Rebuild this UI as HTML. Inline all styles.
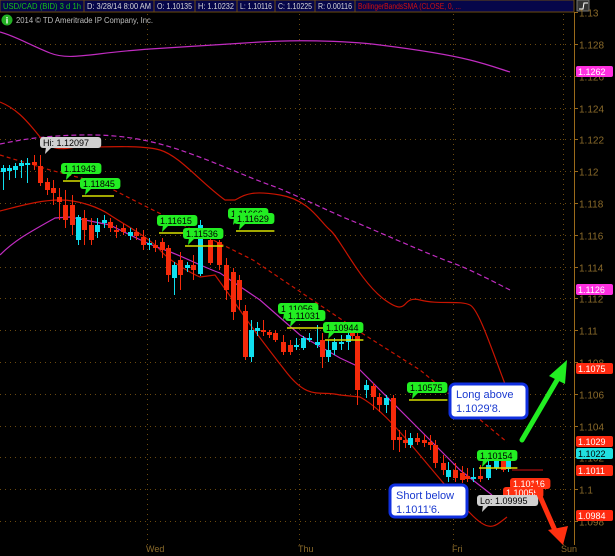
<!DOCTYPE html>
<html><head><meta charset="utf-8"><style>
body{margin:0;background:#000;width:615px;height:556px;overflow:hidden;font-family:"Liberation Sans",sans-serif}
svg{display:block}
</style></head><body>
<svg id="s" width="615" height="556" xmlns="http://www.w3.org/2000/svg" font-family="Liberation Sans, sans-serif">
<rect width="615" height="556" fill="#000"/>
<g id="grid" stroke="#6b4a10" stroke-width="1" stroke-dasharray="1,4"></g>
<!-- top bar -->
<rect x="0" y="0" width="574" height="12" fill="#06064a" stroke="#6b4a10"/>
<g font-size="8.5" fill="#d8d8d8" lengthAdjust="spacingAndGlyphs">
<text x="3" y="9" fill="#18c018" textLength="78" lengthAdjust="spacingAndGlyphs">USD/CAD (BID) 3 d 1h</text>
<line x1="84" y1="0" x2="84" y2="12" stroke="#6b4a10"/>
<text x="87" y="9" textLength="64" lengthAdjust="spacingAndGlyphs">D: 3/28/14 8:00 AM</text>
<line x1="154" y1="0" x2="154" y2="12" stroke="#6b4a10"/>
<text x="157" y="9" textLength="35" lengthAdjust="spacingAndGlyphs">O: 1.10135</text>
<line x1="195" y1="0" x2="195" y2="12" stroke="#6b4a10"/>
<text x="198" y="9" textLength="36" lengthAdjust="spacingAndGlyphs">H: 1.10232</text>
<line x1="237" y1="0" x2="237" y2="12" stroke="#6b4a10"/>
<text x="240" y="9" textLength="32" lengthAdjust="spacingAndGlyphs">L: 1.10116</text>
<line x1="275" y1="0" x2="275" y2="12" stroke="#6b4a10"/>
<text x="278" y="9" textLength="34" lengthAdjust="spacingAndGlyphs">C: 1.10225</text>
<line x1="315" y1="0" x2="315" y2="12" stroke="#6b4a10"/>
<text x="318" y="9" textLength="34" lengthAdjust="spacingAndGlyphs">R: 0.00116</text>
<line x1="355" y1="0" x2="355" y2="12" stroke="#6b4a10"/>
<text x="358" y="9" fill="#d01010" textLength="103" lengthAdjust="spacingAndGlyphs">BollingerBandsSMA (CLOSE, 0, ...</text>
</g>
<rect x="577" y="0" width="12" height="11" fill="#333" stroke="#777"/>
<path d="M579 9 L583 9 L584 3 L588 3" stroke="#fff" fill="none"/>
<circle cx="7" cy="20" r="5.5" fill="#22b022"/>
<text x="7" y="23.5" font-size="9" fill="#fff" text-anchor="middle" font-weight="bold">i</text>
<text x="16" y="23" font-size="8.5" fill="#bdbdbd" textLength="137" lengthAdjust="spacingAndGlyphs">2014 © TD Ameritrade IP Company, Inc.</text>
<!-- axis -->
<line x1="574.5" y1="12" x2="574.5" y2="545" stroke="#9a6a1a"/>
<g id="ax" font-size="10" fill="#8a6a2a"></g>
<g font-size="9" fill="#8a6a2a">
<text x="146" y="552">Wed</text><text x="298" y="552">Thu</text><text x="452" y="552">Fri</text><text x="561" y="552">Sun</text>
</g>
<!-- indicator lines -->
<g fill="none" stroke-width="1.2">
<path stroke="#c02cc0" d="M0,32 C15,36 30,45 50,53 S90,53 150,49 S230,44 260,42 S340,40 380,45 S450,55 470,60 S500,69 510,72"/>
<path stroke="#c02cc0" stroke-dasharray="5,3" d="M0,144 C20,140 40,136 80,135 S150,140 180,150 S250,178 270,185 S330,212 350,220 S430,255 450,262 S500,285 510,290"/>
<path stroke="#c81400" d="M0,102 C15,108 25,118 40,137 S70,146 80,147 S140,144 160,150 S200,182 225,200 L235,200 C245,195 250,190 280,195 S320,222 330,230 S360,282 385,300 S400,295 420,300 S460,300 470,305 S495,360 515,410"/>
<path stroke="#c81400" stroke-dasharray="4,3" d="M0,155 L50,170 L100,183 L147,207 L253,260 L360,332 L420,370 L507,442"/>
<path stroke="#c81400" d="M0,211 C20,206 40,200 60,200 S100,208 110,215 S150,238 160,250 S195,275 200,277 L215,275 L233,300 C245,318 265,345 287,373 S320,390 340,395 L360,397 C375,405 390,420 413,447 S450,492 470,513 S495,526 507,517"/>
<path stroke="#c02cc0" d="M0,255 C15,240 30,232 55,218 L70,217 L110,225 C130,235 150,245 165,250 S205,268 220,273 L260,300 L300,335 L340,358 L355,365 L380,390 L430,440 L460,470 L492,495"/>
</g>
<g id="c"></g>
<line x1="512" y1="470" x2="543" y2="470" stroke="#d01010"/>
<g id="lab" font-size="9"></g>
<!-- boxes -->
<rect x="450" y="384" width="77" height="34" rx="5" fill="#fff" stroke="#1030e0" stroke-width="3"/>
<text x="456" y="398" font-size="11" fill="#1a3ad0">Long above</text>
<text x="456" y="412" font-size="11" fill="#1a3ad0">1.1029'8.</text>
<rect x="390" y="485" width="77" height="32" rx="5" fill="#fff" stroke="#1030e0" stroke-width="3"/>
<text x="396" y="499" font-size="11" fill="#1a3ad0">Short below</text>
<text x="396" y="513" font-size="11" fill="#1a3ad0">1.1011'6.</text>
<!-- arrows -->
<line x1="522" y1="440" x2="560" y2="375" stroke="#22ee22" stroke-width="5" stroke-linecap="round"/>
<polygon points="567,360 549,376 565,384" fill="#22ee22"/>
<line x1="535" y1="485" x2="557" y2="535" stroke="#ff3010" stroke-width="5" stroke-linecap="round"/>
<polygon points="563,545 548,530 568,526" fill="#ff3010"/>
<!-- right labels -->
<g font-size="9" fill="#fff">
<rect x="576" y="66" width="37" height="11" rx="2" fill="#ff30e0"/><text x="578" y="75">1.1262</text>
<rect x="576" y="284" width="37" height="11" rx="2" fill="#ff30e0"/><text x="578" y="293">1.1126</text>
<rect x="576" y="363" width="37" height="11" rx="2" fill="#ff2a10"/><text x="578" y="372">1.1075</text>
<rect x="576" y="436" width="37" height="11" rx="2" fill="#ff2a10"/><text x="578" y="445">1.1029</text>
<rect x="576" y="448" width="37" height="11" rx="2" fill="#20e0e0"/><text x="578" y="457" fill="#000">1.1022</text>
<rect x="576" y="465" width="37" height="11" rx="2" fill="#ff2a10"/><text x="578" y="474">1.1011</text>
<rect x="576" y="510" width="37" height="11" rx="2" fill="#ff2a10"/><text x="578" y="519">1.0984</text>
</g>
</svg>
<script>
var NS="http://www.w3.org/2000/svg";
function el(p,t,a,txt){var e=document.createElementNS(NS,t);for(var k in a)e.setAttribute(k,a[k]);if(txt)e.textContent=txt;p.appendChild(e);return e;}
var Y=function(p){return 44+(1.128-p)*15900;};
var g=document.getElementById('grid'),ax=document.getElementById('ax');
for(var i=0;i<=16;i++){var p=1.13-i*0.002;var y=Math.round(Y(p))+0.5;
 if(y>20&&y<540) el(g,'line',{x1:0,y1:y,x2:574,y2:y});
 el(ax,'line',{x1:574,y1:y,x2:578,y2:y,stroke:'#9a6a1a'});
 var s=(Math.round(p*1000)/1000).toString();
 el(ax,'text',{x:579,y:y+4},s);}
[147,299,453,563].forEach(function(x){el(g,'line',{x1:x+.5,y1:14,x2:x+.5,y2:545});});
var C=[[3,168,172,'c',165,190],[9,168,171,'c',165,180],[15,166,170,'c',163,178],[21,163,166,'c',160,178],[27,163,165,'c',158,183],[34,162,165,'r',155,170],[40,166,183,'r',155,186],[47,182,190,'r',178,195],[53,188,193,'r',180,205],[59,197,202,'r',188,220],[65,205,220,'r',190,228],[72,205,225,'r',195,235],[78,217,240,'c',215,245],[84,218,230,'r',210,245],[91,225,240,'r',218,245],[97,225,232,'c',218,238],[104,220,223,'c',215,228],[110,222,228,'r',218,232],[116,230,232,'r',225,238],[123,228,232,'r',224,235],[130,232,236,'c',228,240],[136,232,236,'r',228,240],[143,237,245,'r',230,250],[149,243,245,'c',238,250],[155,245,248,'r',240,252],[162,242,250,'r',238,258],[168,248,275,'r',245,282],[174,265,278,'c',262,295],[180,260,275,'r',252,290],[187,265,268,'c',262,272],[193,265,270,'r',255,280],[200,225,274,'c',220,276],[210,240,263,'r',235,265],[219,242,265,'r',240,270],[226,265,290,'r',258,300],[233,272,312,'r',268,320],[239,280,300,'r',275,310],[245,311,357,'r',305,360],[251,330,357,'c',320,362],[257,328,331,'c',322,336],[263,330,332,'r',320,336],[269,332,335,'r',330,338],[275,333,340,'r',330,342],[283,342,352,'r',335,355],[290,345,352,'r',340,355],[296,345,347,'c',338,350],[303,338,348,'c',336,350],[309,338,340,'c',333,342],[317,342,345,'c',325,348],[322,340,357,'r',333,368],[328,350,357,'c',340,362],[334,342,350,'c',338,355],[341,342,344,'c',335,350],[348,335,342,'c',328,350],[352,330,336,'r',325,340],[357,336,390,'r',332,405],[366,385,390,'c',380,398],[373,386,397,'r',383,410],[379,397,405,'r',393,412],[386,398,405,'c',395,413],[393,398,440,'r',395,450],[399,437,440,'r',430,452],[405,440,443,'r',430,448],[410,438,445,'c',433,448],[417,438,442,'r',433,445],[424,440,443,'r',435,447],[430,442,445,'r',435,450],[435,445,463,'r',440,468],[443,463,470,'r',455,475],[448,470,477,'c',462,482],[455,470,478,'r',463,482],[462,473,480,'r',466,483],[467,476,479,'r',468,482],[473,477,479,'c',468,482],[480,476,479,'r',465,482],[488,465,478,'c',460,480],[496,459,468,'c',455,470],[503,460,470,'r',455,472],[508,460,469,'c',455,472]];
var cg=document.getElementById('c');
C.forEach(function(k){var col=k[3]=='c'?'#10e0f0':'#f52a0a';
 el(cg,'line',{x1:k[0]+.5,y1:k[4],x2:k[0]+.5,y2:k[5],stroke:col});
 el(cg,'rect',{x:k[0]-2,y:k[1],width:5,height:Math.max(2,k[2]-k[1]),fill:col});});
var L=document.getElementById('lab');
function lab(x,y,t,bg,fg,lw){var w=t.length*5.2+4;
 if(lw!==0) el(L,'line',{x1:x+2,y1:y+18,x2:x+(lw||w),y2:y+18,stroke:'#d8e000','stroke-width':1.5});
 el(L,'polygon',{points:(x+6)+','+(y+10)+' '+(x+12)+','+(y+10)+' '+(x+5)+','+(y+17),fill:bg});
 el(L,'rect',{x:x,y:y,width:w,height:11,rx:3,fill:bg});
 el(L,'text',{x:x+3,y:y+9,fill:fg},t);}
lab(40,137,'Hi: 1.12097','#d0d0d0','#000',0);
lab(61,163,'1.11943','#22ee22','#000');
lab(80,178,'1.11845','#22ee22','#000',34);
lab(157,215,'1.11615','#22ee22','#000');
lab(183,228,'1.11536','#22ee22','#000');
lab(228,208,'1.11666','#22ee22','#000',0);
lab(234,213,'1.11629','#22ee22','#000');
lab(278,303,'1.11056','#22ee22','#000',0);
lab(285,310,'1.11031','#22ee22','#000');
lab(323,322,'1.10944','#22ee22','#000');
lab(407,382,'1.10575','#22ee22','#000');
lab(477,450,'1.10154','#22ee22','#000');
lab(510,478,'1.10116','#ff3010','#fff',0);
lab(503,487,'1.10055','#ff3010','#fff',0);
lab(477,495,'Lo: 1.09995','#d0d0d0','#000',0);
</script>
</body></html>
